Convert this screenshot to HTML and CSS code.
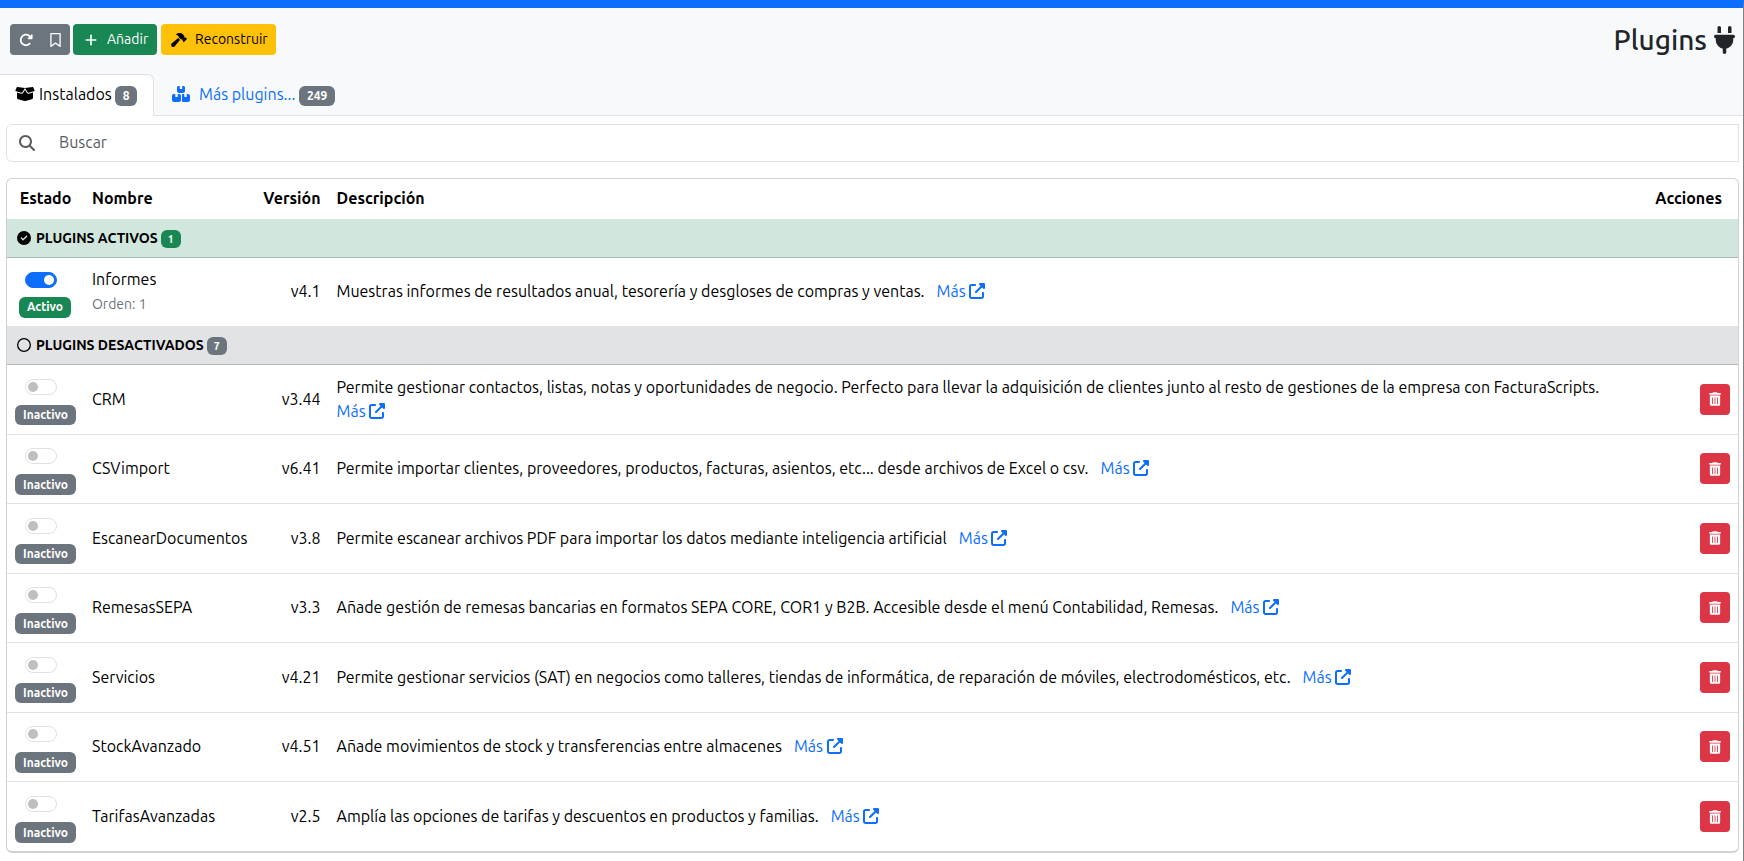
FILE: index.html
```html
<!DOCTYPE html>
<html lang="es">
<head>
<meta charset="utf-8">
<title>Plugins</title>
<link rel="stylesheet" href="styles.css">
</head>
<body>
<svg class="defs" width="0" height="0">
  <symbol id="redo" viewBox="0 0 512 512"><path d="M463.5 224l8.5 0c13.3 0 24-10.7 24-24l0-128c0-9.7-5.8-18.5-14.8-22.2s-19.3-1.7-26.2 5.2L413.4 96.6c-87.6-86.5-228.7-86.2-315.8 1c-87.5 87.5-87.5 229.3 0 316.8s229.3 87.5 316.8 0c12.5-12.5 12.5-32.8 0-45.3s-32.8-12.5-45.3 0c-62.5 62.5-163.8 62.5-226.3 0s-62.5-163.8 0-226.3c62.2-62.2 162.7-62.5 225.3-1L327 183c-6.9 6.9-8.9 17.2-5.2 26.2s12.5 14.8 22.2 14.8l119.5 0z"/></symbol>
  <symbol id="bookmark" viewBox="0 0 384 512"><path d="M24 24H360V488L192 368L24 488Z" fill="none" stroke="currentColor" stroke-width="48" stroke-linejoin="round"/></symbol>
  <symbol id="plus" viewBox="0 0 448 512"><path d="M256 80c0-17.7-14.3-32-32-32s-32 14.3-32 32l0 144L48 224c-17.7 0-32 14.3-32 32s14.3 32 32 32l144 0 0 144c0 17.7 14.3 32 32 32s32-14.3 32-32l0-144 144 0c17.7 0 32-14.3 32-32s-14.3-32-32-32l-144 0 0-144z"/></symbol>
  <symbol id="hammer" viewBox="0 0 576 512"><path d="M413.5 237.5c-28.2 4.8-58.2-3.6-80-25.4l-38.1-38.1C280.4 159 272 138.8 272 117.6l0-12.1L192.3 62c-5.3-2.9-8.6-8.6-8.3-14.7s3.9-11.5 9.5-14l47.2-21C259.1 4.2 279 0 299.2 0l18.1 0c36.7 0 72 14 98.7 39.1l44.6 42c24.2 22.8 33.2 55.7 26.6 86L503 183l8-8c9.4-9.4 24.6-9.4 33.9 0l24 24c9.4 9.4 9.4 24.6 0 33.9l-88 88c-9.4 9.4-24.6 9.4-33.9 0l-24-24c-9.4-9.4-9.4-24.6 0-33.9l8-8-17.5-17.5zM27.4 377.1L260.9 182.6c3.5 4.9 7.5 9.6 11.8 14l38.1 38.1c6 6 12.4 11.2 19.2 15.7L134.9 484.6c-14.5 17.4-36 27.4-58.6 27.4C34.1 512 0 477.8 0 435.7c0-22.6 10.1-44.1 27.4-58.6z"/></symbol>
  <symbol id="search" viewBox="0 0 512 512"><path d="M416 208c0 45.9-14.9 88.3-40 122.7L502.6 457.4c12.5 12.5 12.5 32.8 0 45.3s-32.8 12.5-45.3 0L330.7 376c-34.4 25.2-76.8 40-122.7 40C93.1 416 0 322.9 0 208S93.1 0 208 0S416 93.1 416 208zM208 352a144 144 0 1 0 0-288 144 144 0 1 0 0 288z"/></symbol>
  <symbol id="plug" viewBox="0 0 384 512"><path d="M96 0C78.3 0 64 14.3 64 32l0 96 64 0 0-96c0-17.7-14.3-32-32-32zM288 0c-17.7 0-32 14.3-32 32l0 96 64 0 0-96c0-17.7-14.3-32-32-32zM32 160c-17.7 0-32 14.3-32 32s14.3 32 32 32l0 32c0 77.4 55 142 128 156.8l0 67.2c0 17.7 14.3 32 32 32s32-14.3 32-32l0-67.2C297 398 352 333.4 352 256l0-32c17.7 0 32-14.3 32-32s-14.3-32-32-32L32 160z"/></symbol>
  <symbol id="external" viewBox="0 0 512 512"><path d="M352 0c-12.9 0-24.6 7.8-29.6 19.8s-2.2 25.7 6.9 34.9L370.7 96 201.4 265.4c-12.5 12.5-12.5 32.8 0 45.3s32.8 12.5 45.3 0L416 141.3l41.4 41.4c9.2 9.2 22.9 11.9 34.9 6.9s19.8-16.6 19.8-29.6l0-128c0-17.7-14.3-32-32-32L352 0zM80 32C35.8 32 0 67.8 0 112L0 432c0 44.2 35.8 80 80 80l320 0c44.2 0 80-35.8 80-80l0-112c0-17.7-14.3-32-32-32s-32 14.3-32 32l0 112c0 8.8-7.2 16-16 16L80 448c-8.8 0-16-7.2-16-16l0-320c0-8.8 7.2-16 16-16l112 0c17.7 0 32-14.3 32-32s-14.3-32-32-32L80 32z"/></symbol>
  <symbol id="check" viewBox="0 0 512 512"><path d="M256 512A256 256 0 1 0 256 0a256 256 0 1 0 0 512zM369 209L241 337c-9.4 9.4-24.6 9.4-33.9 0l-64-64c-9.4-9.4-9.4-24.6 0-33.9s24.6-9.4 33.9 0l47 47L335 175c9.4-9.4 24.6-9.4 33.9 0s9.4 24.6 0 33.9z"/></symbol>
  <symbol id="circle" viewBox="0 0 512 512"><circle cx="256" cy="256" r="232" fill="none" stroke="currentColor" stroke-width="48"/></symbol>
  <symbol id="trash" viewBox="0 0 448 512"><path fill-rule="evenodd" d="M135.2 17.7L128 32 32 32C14.3 32 0 46.3 0 64S14.3 96 32 96l384 0c17.7 0 32-14.3 32-32s-14.3-32-32-32l-96 0-7.2-14.3C307.4 6.8 296.3 0 284.2 0L163.8 0c-12.1 0-23.2 6.8-28.6 17.7zM416 128L32 128v320c0 35.300 28.700 64 64 64h256c35.300 0 64-28.700 64-64zM112 208a16 16 0 0 1 32 0v224a16 16 0 0 1-32 0zM208 208a16 16 0 0 1 32 0v224a16 16 0 0 1-32 0zM304 208a16 16 0 0 1 32 0v224a16 16 0 0 1-32 0z"/></symbol>
  <symbol id="box" viewBox="0 0 640 512"><path d="M58.900 42.100c3-6.100 9.600-9.600 16.300-8.700L320 64 564.800 33.400c6.700-.8 13.300 2.700 16.300 8.700l41.700 83.400c9 17.900-.6 39.600-19.800 45.100L439.600 217.300c-13.900 4-28.800-1.900-36.200-14.300L320 64 236.600 203c-7.400 12.400-22.300 18.300-36.200 14.300L37.100 170.600c-19.300-5.500-28.800-27.200-19.800-45.100L58.900 42.100zM321.100 128l54.900 91.400c14.900 24.800 44.600 36.600 72.500 28.600L576 211.600v167c0 22-15 41.200-36.400 46.600l-204.100 51c-10.200 2.600-20.900 2.600-31 0l-204.100-51C79 419.700 64 400.500 64 378.500v-167L191.600 248c27.800 8 57.600-3.800 72.500-28.600L318.900 128h2.200z"/></symbol>
  <symbol id="boxes" viewBox="0 0 576 512"><path d="M248 0h-40c-26.500 0-48 21.500-48 48v112c0 35.300 28.700 64 64 64h128c35.300 0 64-28.700 64-64V48c0-26.500-21.500-48-48-48h-40v80c0 8.800-7.200 16-16 16h-48c-8.800 0-16-7.200-16-16zM64 256c-35.300 0-64 28.700-64 64v128c0 35.300 28.700 64 64 64h160c35.300 0 64-28.700 64-64V320c0-35.300-28.700-64-64-64h-40v80c0 8.800-7.200 16-16 16h-48c-8.800 0-16-7.200-16-16v-80zM352 512h160c35.300 0 64-28.700 64-64V320c0-35.300-28.700-64-64-64h-40v80c0 8.800-7.200 16-16 16h-48c-8.800 0-16-7.200-16-16v-80h-40c-15 0-28.800 5.100-39.700 13.800 4.900 10.400 7.700 22 7.700 34.200v160c0 12.200-2.800 23.800-7.700 34.200C323.200 506.900 337 512 352 512z"/></symbol>
</svg>
<div class="page">
  <header class="header">
    <div class="toolbar">
      <div class="btn-group">
        <button class="btn btn-secondary"><svg class="i14"><use href="#redo"/></svg></button>
        <button class="btn btn-secondary"><svg class="i-bookmark"><use href="#bookmark"/></svg></button>
      </div>
      <button class="btn btn-success"><svg class="i-plus"><use href="#plus"/></svg><span>Añadir</span></button>
      <button class="btn btn-warning"><svg class="i-hammer"><use href="#hammer"/></svg><span>Reconstruir</span></button>
      <h1 class="title"><span>Plugins</span><svg class="i-plug"><use href="#plug"/></svg></h1>
    </div>
    <nav class="tabs">
      <a class="tab active"><svg class="i-box"><use href="#box"/></svg><span class="t1">Instalados</span><b class="badge">8</b></a>
      <a class="tab more"><svg class="i-boxes"><use href="#boxes"/></svg><span class="t2">Más plugins...</span><b class="badge">249</b></a>
    </nav>
  </header>
  <div class="search"><svg class="i16"><use href="#search"/></svg><span>Buscar</span></div>
  <main class="card">
    <table>
      <colgroup><col class="c-state"><col class="c-name"><col class="c-version"><col><col class="c-actions"></colgroup>
      <tr class="head"><th class="center">Estado</th><th>Nombre</th><th class="right">Versión</th><th>Descripción</th><th class="right last">Acciones</th></tr>
      <tr class="group on"><td colspan="5"><div><svg class="i14"><use href="#check"/></svg><span>PLUGINS ACTIVOS</span><b class="badge small green">1</b></div></td></tr>
      <tr class="row first"><td class="state"><i class="switch on"></i><b class="badge green">Activo</b></td><td>Informes<small>Orden: 1</small></td><td class="right">v4.1</td><td>Muestras informes de resultados anual, tesorería y desgloses de compras y ventas.<a>Más<svg class="i16"><use href="#external"/></svg></a></td><td></td></tr>
      <tr class="group off"><td colspan="5"><div><svg class="i14"><use href="#circle"/></svg><span>PLUGINS DESACTIVADOS</span><b class="badge small">7</b></div></td></tr>
      <tr class="row"><td class="state"><i class="switch"></i><b class="badge">Inactivo</b></td><td>CRM</td><td class="right">v3.44</td><td>Permite gestionar contactos, listas, notas y oportunidades de negocio. Perfecto para llevar la adquisición de clientes junto al resto de gestiones de la empresa con FacturaScripts.<br><a class="below">Más<svg class="i16"><use href="#external"/></svg></a></td><td class="act"><button class="del"><svg><use href="#trash"/></svg></button></td></tr>
      <tr class="row"><td class="state"><i class="switch"></i><b class="badge">Inactivo</b></td><td>CSVimport</td><td class="right">v6.41</td><td>Permite importar clientes, proveedores, productos, facturas, asientos, etc... desde archivos de Excel o csv.<a>Más<svg class="i16"><use href="#external"/></svg></a></td><td class="act"><button class="del"><svg><use href="#trash"/></svg></button></td></tr>
      <tr class="row"><td class="state"><i class="switch"></i><b class="badge">Inactivo</b></td><td>EscanearDocumentos</td><td class="right">v3.8</td><td>Permite escanear archivos PDF para importar los datos mediante inteligencia artificial<a>Más<svg class="i16"><use href="#external"/></svg></a></td><td class="act"><button class="del"><svg><use href="#trash"/></svg></button></td></tr>
      <tr class="row"><td class="state"><i class="switch"></i><b class="badge">Inactivo</b></td><td>RemesasSEPA</td><td class="right">v3.3</td><td>Añade gestión de remesas bancarias en formatos SEPA CORE, COR1 y B2B. Accesible desde el menú Contabilidad, Remesas.<a>Más<svg class="i16"><use href="#external"/></svg></a></td><td class="act"><button class="del"><svg><use href="#trash"/></svg></button></td></tr>
      <tr class="row"><td class="state"><i class="switch"></i><b class="badge">Inactivo</b></td><td>Servicios</td><td class="right">v4.21</td><td>Permite gestionar servicios (SAT) en negocios como talleres, tiendas de informática, de reparación de móviles, electrodomésticos, etc.<a>Más<svg class="i16"><use href="#external"/></svg></a></td><td class="act"><button class="del"><svg><use href="#trash"/></svg></button></td></tr>
      <tr class="row"><td class="state"><i class="switch"></i><b class="badge">Inactivo</b></td><td>StockAvanzado</td><td class="right">v4.51</td><td>Añade movimientos de stock y transferencias entre almacenes<a>Más<svg class="i16"><use href="#external"/></svg></a></td><td class="act"><button class="del"><svg><use href="#trash"/></svg></button></td></tr>
      <tr class="row"><td class="state"><i class="switch"></i><b class="badge">Inactivo</b></td><td>TarifasAvanzadas</td><td class="right">v2.5</td><td>Amplía las opciones de tarifas y descuentos en productos y familias.<a>Más<svg class="i16"><use href="#external"/></svg></a></td><td class="act"><button class="del"><svg><use href="#trash"/></svg></button></td></tr>
    </table>
  </main>
</div>
</body>
</html>
```
FILE: styles.css
```css
* { box-sizing: border-box; }
body {
  margin: 0;
  height: 861px;
  overflow: hidden;
  background: #fff;
  color: #000;
  font: 16px/24px Ubuntu, "Noto Sans", sans-serif;
}
svg { display: block; flex: none; fill: currentColor; }
.defs { position: absolute; }
.page { height: 861px; border-top: 8px solid #0d6efd; border-right: 1px solid #808080; }
.header { height: 108px; padding-top: 16px; background: #f8f9fa; border-bottom: 1px solid #dee2e6; }
.toolbar { display: flex; align-items: flex-start; padding: 0 8px 0 10px; height: 50px; }
.btn-group { display: flex; margin-right: 3px; }
button { border: 0; font: inherit; color: #fff; }
.btn { display: flex; align-items: center; height: 31px; padding: 0 8px; border-radius: 4px; font-size: 14px; line-height: 21px; }
.btn-secondary { background: #6c757d; width: 30px; justify-content: center; }
.btn-group .btn:first-child { border-radius: 4px 0 0 4px; padding-left: 10px; }
.btn-group .btn:last-child { border-radius: 0 4px 4px 0; }
.btn-success { background: #198754; width: 84px; padding-left: 12px; margin-right: 4px; }
.btn-success span { margin-left: 10px; }
.btn-warning { background: #ffc107; color: #000; width: 115px; padding-left: 10px; }
.btn-warning span { margin-left: 8px; }
.title { display: flex; align-items: center; gap: 7px; margin: 0 0 0 auto; height: 32px; font-size: 28px; font-weight: 500; line-height: 32px; color: #212529; }
.i14 { width: 14px; height: 14px; }
.i16 { width: 16px; height: 16px; }
.i-bookmark { width: 11px; height: 14px; }
.i-plus { width: 12px; height: 14px; }
.i-hammer { width: 16px; height: 14px; }
.i-plug { width: 21px; height: 28px; }
.i-box { width: 20px; height: 16px; }
.i-boxes { width: 18px; height: 16px; }
.tabs { display: flex; }
.tab { display: flex; align-items: center; height: 42px; padding: 0 16px 2px; }
.tab.active { width: 154px; padding: 0 16px 3px 15px; background: #fff; border: 1px solid #dee2e6; border-width: 1px 1px 0 0; border-radius: 0 6px 0 0; }
.t1 { margin-left: 4px; width: 77px; white-space: nowrap; }
.more { color: #0d6efd; padding-left: 18px; }
.t2 { margin-left: 9px; width: 100px; white-space: nowrap; }
.badge { display: inline-flex; align-items: center; justify-content: center; height: 20px; padding: 0 8px; border-radius: 6px; background: #6c757d; color: #fff; font-size: 12px; font-weight: 700; line-height: 12px; }
.tab .badge { margin-top: 4px; }
.tab.active .badge { width: 22px; padding: 0; }
.green { background: #198754; }
.search { display: flex; align-items: center; margin: 8px 4px 16px 6px; height: 38px; padding-left: 12px; border: 1px solid #dee2e6; border-radius: 6px 0 0 6px; color: #595c5f; }
.search span { margin-left: 24px; padding-bottom: 2px; }
.card { margin: 0 4px 0 6px; border: 1px solid #d0d1d2; border-bottom-width: 2px; border-radius: 6px; height: 675px; }
table { width: 100%; border-collapse: separate; border-spacing: 0; table-layout: fixed; }
.c-state { width: 77px; }
.c-name { width: 162px; }
.c-version { width: 83px; }
.c-actions { width: 91px; }
th, td { padding: 0 8px; text-align: left; vertical-align: middle; white-space: nowrap; }
th { height: 40px; padding-bottom: 2px; font-weight: 700; }
.center { text-align: center; }
.right { text-align: right; padding-right: 8.5px; }
.last { padding-right: 16px; }
.right + td, .right + th:not(.last) { padding-left: 7.5px; }
.group td { height: 39px; padding: 0 10px; border-bottom: 1px solid #a7b9b1; background: #d1e7dd; font-size: 14px; font-weight: 700; }
.group.off td { background: #e2e3e5; border-color: #b5b6b7; }
.group div { display: flex; align-items: center; }
.group span { margin: 0 3px 0 5px; }
.group .badge { width: 20px; height: 18px; padding: 0; font-size: 10.5px; margin-top: 2px; }
.row td { height: 69.5px; padding-bottom: 1px; border-bottom: 1px solid #dee2e6; }
.row.first td { height: 68px; padding-bottom: 2px; border: 0; }
.row:last-child td { border: 0; }
.row .state, .row.first .state { text-align: center; padding: 5.5px 0 0; }
.switch { display: block; position: relative; width: 32px; height: 16px; margin: 0 0 10px 18px; border: 1px solid #dee2e6; border-radius: 8px; }
.switch::after { content: ""; position: absolute; left: 2px; top: 2px; width: 10px; height: 10px; border-radius: 50%; background: #bfbfbf; }
.switch.on { background: #0d6efd; border-color: #0d6efd; margin-bottom: 9px; }
.switch.on::after { left: 18px; background: #fff; }
.state .badge { display: flex; width: 61px; height: 20.5px; padding: 0; margin-left: 8px; }
.state .badge.green { width: 52px; margin-left: 12px; height: 21px; }
small { display: block; margin-bottom: -1px; padding-top: 1px; font-size: 14px; color: #6c757d; }
a { color: #0d6efd; }
.tab.active { color: #000; }
.row a { display: inline-flex; align-items: center; gap: 3.5px; margin-left: 12px; vertical-align: top; }
.row a.below { margin-left: 0; }
.row .act { text-align: right; padding-bottom: 0; }
.del { display: inline-flex; align-items: center; justify-content: center; width: 30px; height: 31px; padding: 0; border-radius: 4px; background: #dc3545; vertical-align: middle; }
.del svg { width: 12px; height: 14px; }
```
